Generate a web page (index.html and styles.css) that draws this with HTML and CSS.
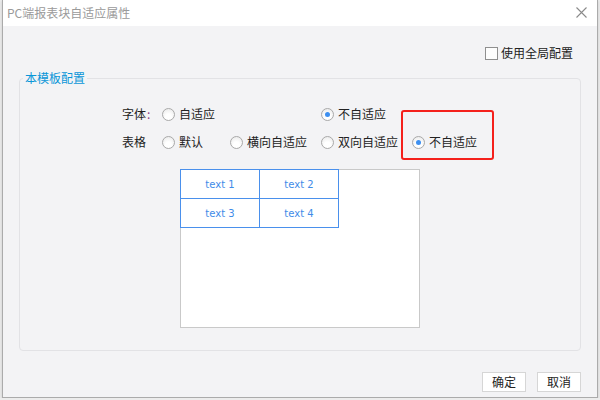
FILE: index.html
```html
<!DOCTYPE html>
<html lang="zh-CN">
<head>
    <meta charset="UTF-8">
    <title>PC端报表块自适应属性</title>
    <link rel="stylesheet" href="styles.css">
</head>
<body>
    <div class="dialog">
        <div class="title-bar">
            <span class="title">PC端报表块自适应属性</span>
            <svg class="close" width="11" height="11" viewBox="0 0 11 11">
                <path d="M0.5 0.5 L10.5 10.5 M10.5 0.5 L0.5 10.5" stroke="#8a8a8a" stroke-width="1.1" fill="none"/>
            </svg>
        </div>

        <div class="content">
            <div class="global-row">
                <label class="check"><span class="check-box"></span>使用全局配置</label>
            </div>

            <fieldset class="group">
                <legend>本模板配置</legend>
                <div class="group-inner">
                    <div class="options">
                        <span class="opt-label">字体<span class="colon">:</span></span>
                        <label class="radio"><span class="dot"></span>自适应</label>
                        <span></span>
                        <label class="radio"><span class="dot checked"></span>不自适应</label>
                        <span></span>

                        <span class="opt-label">表格</span>
                        <label class="radio"><span class="dot"></span>默认</label>
                        <label class="radio"><span class="dot"></span>横向自适应</label>
                        <label class="radio"><span class="dot"></span>双向自适应</label>
                        <label class="radio marked"><span class="dot checked"></span>不自适应</label>
                    </div>

                    <div class="preview">
                        <table class="sample">
                            <tr><td>text 1</td><td>text 2</td></tr>
                            <tr><td>text 3</td><td>text 4</td></tr>
                        </table>
                    </div>
                </div>
            </fieldset>

            <div class="buttons">
                <button>确定</button>
                <button>取消</button>
            </div>
        </div>
    </div>
</body>
</html>
```

FILE: styles.css
```css
body {
    margin: 0;
    background: #ececec;
    font-family: "Noto Sans CJK SC", "Noto Sans", sans-serif;
    font-size: 12px;
    color: #222;
}

/* dialog frame */
.dialog {
    box-sizing: border-box;
    width: 596px;
    height: 398px;
    margin-left: 2px;
    border: 1px solid #ababab;
    border-top: none;
    background: #f3f3f5;
    display: flex;
    flex-direction: column;
    box-shadow: 0 1px 3px rgba(0, 0, 0, 0.15);
}

.title-bar {
    height: 26px;
    background: #fff;
    display: flex;
    align-items: center;
    justify-content: space-between;
    padding: 0 10px 0 4px;
}

.title {
    color: #9a9a9a;
    font-size: 12px;
    line-height: 26px;
}

.close {
    margin-top: -1px;
}

.content {
    flex: 1;
    display: flex;
    flex-direction: column;
    padding: 0 16px 0 16px;
}

/* global config checkbox */
.global-row {
    display: flex;
    justify-content: flex-end;
    padding: 19px 8px 0 0;
    height: 16px;
}

.check {
    display: flex;
    align-items: center;
    gap: 3px;
    line-height: 16px;
}

.check-box {
    box-sizing: border-box;
    width: 13px;
    height: 13px;
    border: 1px solid #8f8f8f;
    background: #fdfdfd;
}

/* template group */
.group {
    margin: 9px 0 0 0;
    padding: 0;
    min-width: 0;
    border: 1px solid #e2e2e5;
    border-radius: 4px;
}

.group legend {
    margin-left: 3px;
    padding: 0 2px;
    color: #0a96d8;
    font-size: 12px;
    line-height: 16px;
}

.group-inner {
    height: 264px;
    padding: 18px 0 0 160px;
    box-sizing: border-box;
}

.options {
    display: grid;
    grid-template-columns: 40px 68px 91px 91px auto;
    grid-auto-rows: 20px;
    row-gap: 8px;
    margin-left: -58px;
}

.opt-label {
    line-height: 20px;
}

.colon {
    color: #8a3a8a;
    margin-left: 1px;
}

.radio {
    display: flex;
    align-items: center;
    gap: 4px;
    line-height: 20px;
    white-space: nowrap;
}

.dot {
    box-sizing: border-box;
    width: 13px;
    height: 13px;
    border-radius: 50%;
    border: 1px solid #a9a9a9;
    background: radial-gradient(circle at 50% 70%, #ffffff 30%, #e6e6e6 100%);
    display: flex;
    align-items: center;
    justify-content: center;
}

.dot.checked::after {
    content: "";
    width: 5px;
    height: 5px;
    border-radius: 50%;
    background: #3d8ff0;
}

/* red highlight round the last option */
.marked {
    position: relative;
}

.marked::before {
    content: "";
    position: absolute;
    left: -11px;
    top: -22px;
    width: 89px;
    height: 46px;
    border: 2px solid #f4201c;
    border-radius: 3px;
}

/* preview */
.preview {
    box-sizing: border-box;
    width: 240px;
    height: 159px;
    margin-top: 17px;
    background: #fff;
    border: 1px solid #c9c9c9;
}

.sample {
    border-collapse: collapse;
    margin: -1px 0 0 -1px;
}

.sample td {
    box-sizing: border-box;
    width: 79px;
    height: 29px;
    padding: 1px 0 0 0;
    border: 1px solid #4a90ec;
    text-align: center;
    color: #3f8ce8;
    font-family: "DejaVu Sans", sans-serif;
    font-size: 10px;
}

/* bottom buttons */
.buttons {
    display: flex;
    justify-content: flex-end;
    gap: 11px;
    margin-top: 21px;
    padding-right: 0;
}

button {
    box-sizing: border-box;
    width: 44px;
    height: 20px;
    padding: 0;
    background: #fff;
    border: 1px solid #d6d6d6;
    font-family: "Noto Sans CJK SC", sans-serif;
    font-size: 12px;
    line-height: 18px;
    color: #222;
}
```
